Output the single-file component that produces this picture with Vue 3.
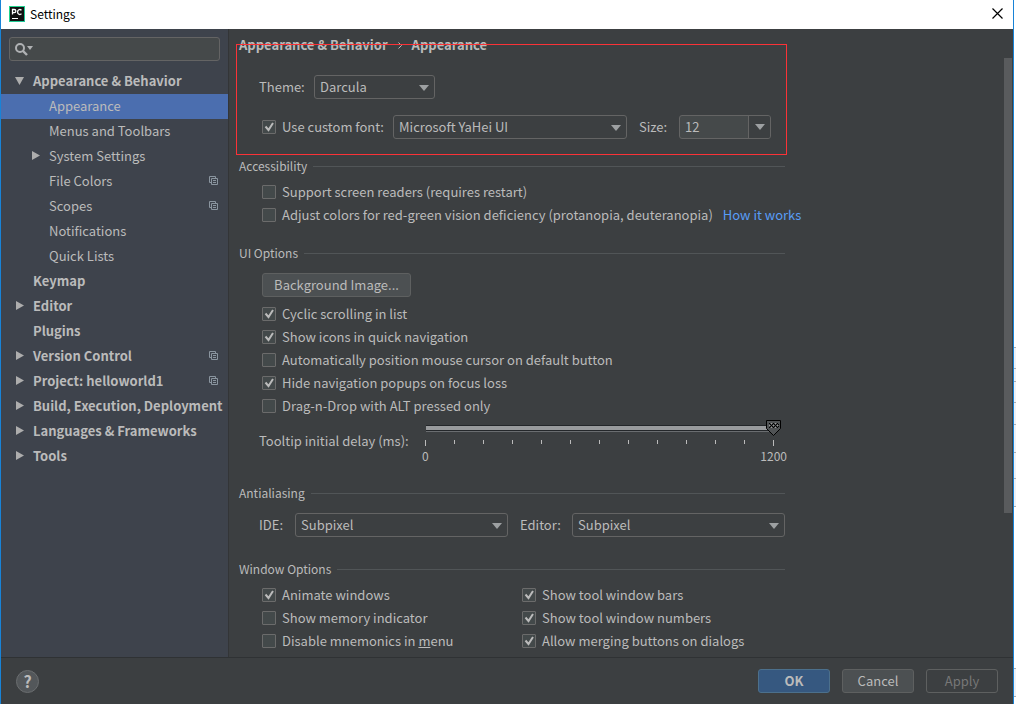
<script setup>
import { ref } from 'vue'

const tree = [
  { label: 'Appearance & Behavior', top: true, arrow: 'down' },
  { label: 'Appearance', selected: true },
  { label: 'Menus and Toolbars' },
  { label: 'System Settings', arrow: 'right' },
  { label: 'File Colors', copy: true },
  { label: 'Scopes', copy: true },
  { label: 'Notifications' },
  { label: 'Quick Lists' },
  { label: 'Keymap', top: true },
  { label: 'Editor', top: true, arrow: 'right' },
  { label: 'Plugins', top: true },
  { label: 'Version Control', top: true, arrow: 'right', copy: true },
  { label: 'Project: helloworld1', top: true, arrow: 'right', copy: true },
  { label: 'Build, Execution, Deployment', top: true, arrow: 'right' },
  { label: 'Languages & Frameworks', top: true, arrow: 'right' },
  { label: 'Tools', top: true, arrow: 'right' },
]

const customFont = ref(true)
const fontSize = ref('12')
const delay = ref(1200)

const accessibility = ref([
  { label: 'Support screen readers (requires restart)', on: false },
  { label: 'Adjust colors for red-green vision deficiency (protanopia, deuteranopia)', on: false, link: 'How it works' },
])
const uiOptions = ref([
  { label: 'Cyclic scrolling in list', on: true },
  { label: 'Show icons in quick navigation', on: true },
  { label: 'Automatically position mouse cursor on default button', on: false },
  { label: 'Hide navigation popups on focus loss', on: true },
  { label: 'Drag-n-Drop with ALT pressed only', on: false },
])
const windowOptions = ref([
  { label: 'Animate windows', on: true },
  { label: 'Show tool window bars', on: true },
  { label: 'Show memory indicator', on: false },
  { label: 'Show tool window numbers', on: true },
  { label: 'Disable mnemonics in ', key: 'm', rest: 'enu', on: false },
  { label: 'Allow merging buttons on dialogs', on: true },
])
const edgeLines = [347, 368, 381, 402, 424, 452, 478, 506, 668, 696]
</script>

<template>
  <div class="screen">
    <div class="window">
      <header class="titlebar">
        <svg class="logo" width="16" height="16" viewBox="0 0 16 16" aria-hidden="true">
          <defs>
            <linearGradient id="edge" x1="0" y1="0" x2="1" y2="1">
              <stop offset="0" stop-color="#21d789" />
              <stop offset="1" stop-color="#1fc49a" />
            </linearGradient>
          </defs>
          <rect width="16" height="16" fill="url(#edge)" />
          <rect x="1" y="1" width="14" height="14" fill="#111" />
          <path d="M3.5 8.5V3.5H5.2C7.4 3.5 7.4 6.6 5.2 6.6H3.5M12.5 4.2C10.600 2.700 8.600 4 8.600 6C8.600 8 10.600 9.300 12.500 7.800" fill="none" stroke="#fff" stroke-width="1.300" />
          <rect x="3" y="12" width="6" height="1" fill="#fff" />
        </svg>
        <h1>Settings</h1>
        <button class="close" aria-label="Close">
          <svg width="11" height="11" viewBox="0 0 11 11"><path d="M.5.5l10 10M10.500.5l-10 10" stroke="#000" stroke-width="1.200" /></svg>
        </button>
      </header>

      <div class="body">
        <aside class="sidebar">
          <div class="search">
            <svg width="20" height="15" viewBox="0 0 20 15" aria-hidden="true">
              <circle cx="6" cy="6" r="4" fill="none" stroke="#afb1b3" stroke-width="2" />
              <path d="M9 9l4 4" stroke="#afb1b3" stroke-width="2.400" />
              <path d="M13 4h6l-3 4z" fill="#afb1b3" />
            </svg>
            <input type="text" aria-label="Search settings" />
          </div>
          <nav class="tree">
            <button v-for="n in tree" :key="n.label" class="node" :class="{ top: n.top, selected: n.selected }">
              <span class="arrow">
                <svg v-if="n.arrow === 'down'" width="9" height="9" viewBox="0 0 9 9"><path d="M0 1h9L4.500 9z" fill="#adadad" /></svg>
                <svg v-if="n.arrow === 'right'" width="9" height="9" viewBox="0 0 9 9"><path d="M1 0v9L9 4.500z" fill="#adadad" /></svg>
              </span>
              <span class="name">{{ n.label }}</span>
              <svg v-if="n.copy" class="copy" width="9" height="9" viewBox="0 0 9 9" fill="none" stroke="#8a959f">
                <path d="M2 6.500H.5v-6h6V2M2.500 2.500h6v6h-6zM4 4.500h3M4 6.500h3" />
              </svg>
            </button>
          </nav>
        </aside>

        <main class="main">
          <div class="content">
            <h2 class="crumbs">
              <span>Appearance &amp; Behavior</span>
              <svg width="4" height="7" viewBox="0 0 4 7" aria-hidden="true"><path d="M.5.5l3 3-3 3" fill="none" stroke="#bbb" /></svg>
              <span>Appearance</span>
            </h2>
            <div class="outline"></div>

            <div class="row theme">
              <label for="theme" class="w-label">Theme:</label>
              <span class="combo w-theme">
                <select id="theme"><option>Darcula</option></select>
                <svg width="10" height="6" viewBox="0 0 10 6"><path d="M0 0h10L5 6z" fill="#9da0a2" /></svg>
              </span>
            </div>
            <div class="row font">
              <label class="check w-check"><input v-model="customFont" type="checkbox" />Use custom font:</label>
              <span class="combo w-font">
                <select aria-label="Font"><option>Microsoft YaHei UI</option></select>
                <svg width="10" height="6" viewBox="0 0 10 6"><path d="M0 0h10L5 6z" fill="#9da0a2" /></svg>
              </span>
              <label class="w-size" for="size">Size:</label>
              <span class="sizebox">
                <input id="size" v-model="fontSize" type="text" />
                <button aria-label="Choose size"><svg width="10" height="6" viewBox="0 0 10 6"><path d="M0 0h10L5 6z" fill="#9da0a2" /></svg></button>
              </span>
            </div>

            <section class="access">
              <h3>Accessibility</h3>
              <div v-for="o in accessibility" :key="o.label" class="line">
                <label class="check"><input v-model="o.on" type="checkbox" />{{ o.label }}</label>
                <a v-if="o.link" href="#">{{ o.link }}</a>
              </div>
            </section>

            <section class="ui">
              <h3>UI Options</h3>
              <button class="btn image">Background Image...</button>
              <div v-for="o in uiOptions" :key="o.label" class="line">
                <label class="check"><input v-model="o.on" type="checkbox" />{{ o.label }}</label>
              </div>
              <div class="delay">
                <label for="delay">Tooltip initial delay (ms):</label>
                <div class="slider">
                  <input id="delay" v-model="delay" type="range" min="0" max="1200" />
                  <div class="ticks"><i v-for="t in 13" :key="t"></i></div>
                  <div class="scale"><span>0</span><span>1200</span></div>
                </div>
              </div>
            </section>

            <section class="aa">
              <h3>Antialiasing</h3>
              <div class="row aa-row">
                <label for="ide" class="w-ide">IDE:</label>
                <span class="combo">
                  <select id="ide"><option>Subpixel</option></select>
                  <svg width="10" height="6" viewBox="0 0 10 6"><path d="M0 0h10L5 6z" fill="#9da0a2" /></svg>
                </span>
                <label for="editor" class="w-editor">Editor:</label>
                <span class="combo">
                  <select id="editor"><option>Subpixel</option></select>
                  <svg width="10" height="6" viewBox="0 0 10 6"><path d="M0 0h10L5 6z" fill="#9da0a2" /></svg>
                </span>
              </div>
            </section>

            <section class="win">
              <h3>Window Options</h3>
              <div class="columns">
                <div v-for="o in windowOptions" :key="o.label" class="line">
                  <label class="check"><input v-model="o.on" type="checkbox" /><span>{{ o.label }}<u v-if="o.key">{{ o.key }}</u>{{ o.rest }}</span></label>
                </div>
              </div>
            </section>
          </div>
          <div class="scrollbar"><div class="thumb"></div></div>
        </main>
      </div>

      <footer class="footer">
        <button class="help" aria-label="Help">?</button>
        <button class="btn primary">OK</button>
        <button class="btn">Cancel</button>
        <button class="btn" disabled>Apply</button>
      </footer>
    </div>
    <svg class="behind" width="2" height="100%" aria-hidden="true">
      <rect y="347" width="2" height="159" fill="#edf2f8" />
      <rect y="668" width="2" height="28" fill="#edf2f8" />
      <rect v-for="y in edgeLines" :key="y" :y="y" width="2" height="1" fill="#a9adb3" />
    </svg>
  </div>
</template>

<style>
body { background: #fff; }
</style>

<style scoped>
* { box-sizing: border-box; }
.screen {
  display: flex;
  height: 100vh;
  font-family: "Noto Sans CJK SC", "Noto Sans", sans-serif;
  font-size: 13px;
  line-height: 20px;
  color: #bbb;
}
.window {
  flex: 1;
  min-width: 0;
  display: flex;
  flex-direction: column;
  background: #3c3f41;
  border: solid #1883d7;
  border-width: 0 1px;
}
.behind { flex: none; }
button, input, select { font: inherit; color: inherit; margin: 0; }
h1, h2, h3 { margin: 0; font-size: inherit; }

.titlebar {
  flex: none;
  display: flex;
  align-items: center;
  height: 29px;
  padding: 0 10px 2px 8px;
  background: #fff;
  color: #000;
}
.titlebar h1 { flex: 1; margin-left: 5px; font-weight: 400; font-size: 12px; }
.close { display: flex; padding: 0; border: 0; background: none; }

.body { flex: 1; min-height: 0; display: flex; }
.sidebar { flex: none; width: 228px; background: #3e434c; border-right: 1px solid #333537; }
.search {
  display: flex;
  align-items: center;
  height: 24px;
  margin: 8px;
  padding-left: 4px;
  background: #45494a;
  border: 1px solid #646464;
  border-radius: 3px;
}
.search input { flex: 1; min-width: 0; border: 0; background: none; outline: 0; }
.tree { display: flex; flex-direction: column; }
.node {
  display: flex;
  align-items: center;
  height: 25px;
  padding: 0 10px 2px 30px;
  border: 0;
  background: none;
  text-align: left;
}
.node.top { padding-left: 14px; font-weight: 700; }
.node.selected { background: #4b6eaf; }
.arrow { flex: none; display: flex; width: 18px; }
.name { flex: 1; white-space: nowrap; }
.copy { flex: none; }

.main { flex: 1; min-width: 0; display: flex; overflow: hidden; }
.content { position: relative; flex: 1; max-width: 556px; padding: 6px 0 0 10px; }
.scrollbar { flex: none; width: 8px; margin: 29px 1px 0 auto; }
.thumb { height: 76%; background: #595b5d; }
.crumbs { display: flex; align-items: center; gap: 10px; }
.outline {
  position: absolute;
  top: 15px;
  left: 7px;
  right: -2px;
  height: 111px;
  border: 1px solid #fb3237;
  pointer-events: none;
}
.row { display: flex; align-items: center; gap: 12px; height: 24px; padding-left: 20px; }
.row label { flex: none; white-space: nowrap; }
.w-label { width: 43px; }
.w-check { width: 119px; }
.w-size { width: 28px; }
.w-ide { width: 24px; }
.w-editor { width: 40px; }
.theme { margin-top: 20px; }
.font { margin-top: 16px; padding-left: 23px; }
.combo { position: relative; display: block; height: 24px; }
.combo select {
  appearance: none;
  display: block;
  width: 100%;
  height: 24px;
  padding: 0 24px 0 5px;
  background: #3c3f41;
  border: 1px solid #646464;
  border-radius: 3px;
}
.combo svg { position: absolute; right: 6px; top: 10px; pointer-events: none; }
.w-theme { width: 121px; }
.w-font { width: 234px; }
.sizebox {
  display: flex;
  width: 92px;
  height: 24px;
  background: #45494a;
  border: 1px solid #646464;
  border-radius: 3px;
  overflow: hidden;
}
.sizebox input { flex: 1; min-width: 0; padding: 0 5px; border: 0; background: none; }
.sizebox button {
  display: flex;
  align-items: center;
  justify-content: center;
  width: 22px;
  padding: 0;
  background: #3c3f41;
  border: 0;
  border-left: 1px solid #646464;
}

h3 { display: flex; align-items: center; gap: 6px; font-weight: 400; font-size: 12px; }
h3::after { content: ""; flex: 1; height: 1px; background: #515557; }
.access { margin-top: 17px; }
.ui { margin-top: 17px; }
.line { display: flex; align-items: center; gap: 10px; height: 23px; padding-left: 23px; white-space: nowrap; }
.access h3, .win h3 { margin-bottom: 4px; }
.check { display: flex; align-items: center; gap: 6px; white-space: nowrap; }
.check input {
  appearance: none;
  flex: none;
  width: 14px;
  height: 14px;
  background: #43494a;
  border: 1px solid #6b6b6b;
  border-radius: 1px;
}
.check input:checked {
  background: #43494a url("data:image/svg+xml,%3Csvg xmlns='http://www.w3.org/2000/svg' width='12' height='12'%3E%3Cpath d='M2.500 5.500l3 3.500 4.500-7' fill='none' stroke='%23bbb' stroke-width='2'/%3E%3C/svg%3E") center no-repeat;
}
a { color: #589df6; text-decoration: none; }

.btn {
  height: 24px;
  width: 72px;
  padding: 0;
  background: #4c5052;
  border: 1px solid #5e6060;
  border-radius: 3px;
}
.btn.image { display: block; width: 149px; margin: 10px 0 5px 23px; }
.btn.primary { background: #365880; border-color: #4c708c; font-weight: 700; }
.btn:disabled { background: none; color: #777; }

.delay { display: flex; padding: 3px 0 0 20px; }
.delay > label { width: 159px; padding-top: 11px; }
.slider { flex: 1; margin-right: -3px; }
.slider input {
  appearance: none;
  display: block;
  width: calc(100% - 7px);
  height: 16px;
  background: linear-gradient(#24272a 1px, #999b9d 1px 5px, #24272a 5px 6px, #6a6d70 6px) 8px 5px / calc(100% - 16px) 7px no-repeat;
}
.slider input::-webkit-slider-thumb {
  appearance: none;
  width: 15px;
  height: 16px;
  background: url("data:image/svg+xml,%3Csvg xmlns='http://www.w3.org/2000/svg' width='15' height='16'%3E%3Cpath d='M.5.5h14v8l-7 7-7-7z' fill='%23505355' stroke='%23000'/%3E%3Cpath d='M3 3.500h10M5 5.500h8M3 7.500h10' stroke='%23000' stroke-dasharray='1 3'/%3E%3Cpath d='M5 3.500h8M3 5.500h10M5 7.500h8' stroke='%23999' stroke-dasharray='1 3'/%3E%3Cpath d='M4 4.500h9M4 6.500h9' stroke='%23000' stroke-dasharray='1 1'/%3E%3C/svg%3E");
}
.ticks { display: flex; justify-content: space-between; height: 6px; margin: 4px 14px 0 7px; }
.ticks i { width: 1px; height: 4px; background: #bbb; }
.ticks i:first-child, .ticks i:last-child { height: 6px; }
.scale { display: flex; justify-content: space-between; padding: 0 1px 0 4px; font-size: 12px; }

.aa { margin-top: 17px; }
.aa-row { margin-top: 10px; margin-bottom: 22px; }
.aa-row .combo { flex: 1; }
.columns { display: grid; grid-template-columns: 260px 1fr; }

.footer {
  flex: none;
  display: flex;
  align-items: center;
  gap: 12px;
  height: 47px;
  padding: 0 15px;
  border-top: 1px solid #2f3234;
}
.help {
  width: 23px;
  height: 23px;
  margin-right: auto;
  padding: 0;
  border: 1px solid #6a6d6f;
  border-radius: 50%;
  background: #53575a;
  font-weight: 700;
  font-size: 16px;
  line-height: 20px;
}
</style>
